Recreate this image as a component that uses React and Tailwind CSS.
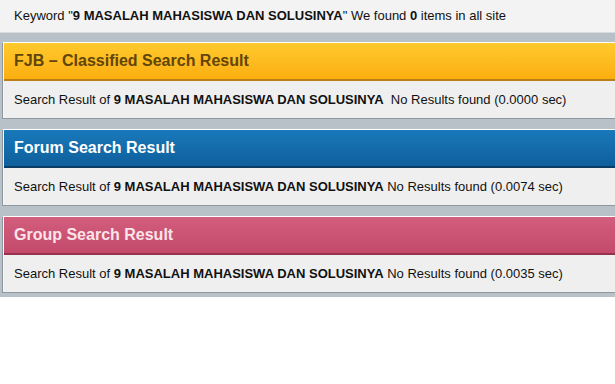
import React from 'react';

const keyword = '9 MASALAH MAHASISWA DAN SOLUSINYA';

const sections = [
  {
    title: 'FJB – Classified Search Result',
    head: 'bg-gradient-to-b from-[#ffca2c] to-[#fbae0e] text-[#624509] border-[#b97f16]',
    time: '0.0000',
    gap: '\u00a0 ',
  },
  {
    title: 'Forum Search Result',
    head: 'bg-gradient-to-b from-[#1979bb] to-[#0f5f9c] text-white border-[#0a3c66]',
    time: '0.0074',
    gap: ' ',
  },
  {
    title: 'Group Search Result',
    head: 'bg-gradient-to-b from-[#d35d7d] to-[#c34a6a] text-[#fbe4ea] border-[#96324e]',
    time: '0.0035',
    gap: ' ',
  },
];

const App = () => {
  return (
    <div className="w-[615px] h-[384px] overflow-hidden bg-white text-[13px] text-[#111]" style={{ fontFamily: '"Liberation Sans", Arial, sans-serif' }}>
      {/* keyword bar */}
      <div className="h-[33px] bg-[#f3f3f3] border-b border-[#d8dcdf] flex items-center px-[14px]">
        <span>
          Keyword "<b>{keyword}</b>" We found <b>0</b> items in all site
        </span>
      </div>

      {/* result boxes */}
      <div className="bg-[#b8c1c7] pt-[9px] pb-[4px] pl-[2px] flex flex-col gap-[10px]">
        {sections.map((s) => (
          <div key={s.title} className="border-l border-l-[#8e979d] border-t border-t-white border-b border-b-[#8f989e]">
            <div className="border-l border-l-[#f6f6f6]">
              <div className={`h-[38px] border-b-2 flex items-center px-[10px] text-[16px] font-bold ${s.head}`}>
                {s.title}
              </div>
              <div className="h-[37px] bg-[#efefef] flex items-center px-[10px]">
                <span>
                  Search Result of <b>{keyword}</b>{s.gap}No Results found ({s.time} sec)
                </span>
              </div>
            </div>
          </div>
        ))}
      </div>
    </div>
  );
};

export default App;
